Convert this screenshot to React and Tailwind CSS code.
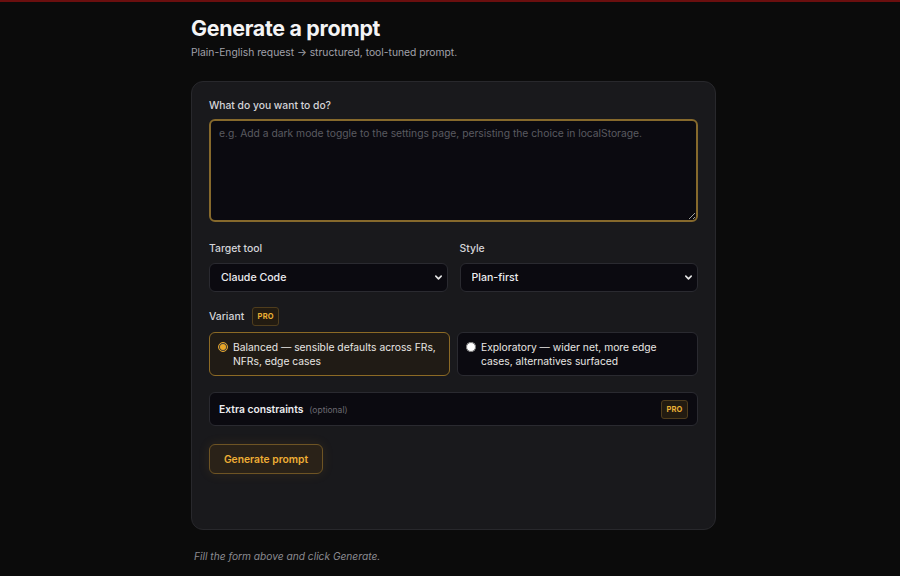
import React from 'react'

// 下拉选择框
function SelectField({ label, value, options }) {
  return (
    <div className="flex flex-col gap-[7px]">
      <span className="text-[10.4px] font-medium leading-[14px] text-[#d4d4d8]">{label}</span>
      <div className="relative">
        <select
          defaultValue={value}
          className="h-[29px] w-full appearance-none rounded-md border border-[#2a2a30] bg-[#0b0a10] pl-[11px] pr-8 text-[10.6px] font-medium text-[#ececef] outline-none"
        >
          {options.map((o) => (
            <option key={o}>{o}</option>
          ))}
        </select>
        <svg
          className="pointer-events-none absolute right-[5px] top-[10px] h-[9px] w-[9px] text-[#e5e5e5]"
          viewBox="0 0 10 10"
          fill="none"
          stroke="currentColor"
          strokeWidth="1.8"
          strokeLinecap="round"
          strokeLinejoin="round"
        >
          <path d="M2 3.5l3 3 3-3" />
        </svg>
      </div>
    </div>
  )
}

function ProBadge() {
  return (
    <span className="inline-flex h-[19px] w-[27px] items-center justify-center rounded-[3px] border border-[#4f3d1d] bg-[#221b11] text-[7.5px] font-bold tracking-wide text-[#eab035]">
      PRO
    </span>
  )
}

// 变体选项卡片
function VariantOption({ checked, title, children }) {
  return (
    <label
      className={`flex items-start gap-[5px] rounded-md border pb-[7px] pl-[8px] pr-[8px] pt-[7px] text-[10.3px] leading-[14px] ${
        checked ? 'border-[#8c6a25] bg-[#201b15] text-[#e8e6e3]' : 'border-[#2a2a30] bg-[#0b0a10] text-[#e8e6e3]'
      }`}
    >
      <input
        type="radio"
        name="variant"
        defaultChecked={checked}
        className="m-0 mt-[2px] h-[10px] w-[10px] shrink-0 accent-[#e8a628]"
      />
      <span>
        {title} — {children}
      </span>
    </label>
  )
}

export default function App() {
  return (
    <div
      className="min-h-[576px] w-full border-t-2 border-[#6b0f0f] bg-[#0b0b0b] pl-[191px] text-white"
      style={{ fontFamily: 'Inter, "Noto Sans", sans-serif' }}
    >
      <div className="w-[525px] pt-[12px]">
        {/* 标题 */}
        <h1 className="text-[21.4px] font-bold leading-[28px] tracking-[-0.3px] text-[#f4f4f5]">Generate a prompt</h1>
        <p className="mt-[3px] text-[10.3px] leading-[14px] text-[#a1a1aa]">
          Plain-English request → structured, tool-tuned prompt.
        </p>

        {/* 表单卡片 */}
        <div className="mt-[22px] h-[449px] rounded-xl border border-[#28282c] bg-[#19191c] px-[17px] pt-[16px]">
          <label className="block text-[10.3px] font-medium leading-[14px] text-[#d4d4d8]">What do you want to do?</label>
          <textarea
            autoFocus
            placeholder="e.g. Add a dark mode toggle to the settings page, persisting the choice in localStorage."
            className="mt-[7px] block h-[103px] w-full resize-y rounded-md border-2 border-[#86692c] bg-[#0b0a10] px-[8px] py-[5px] text-[10.3px] text-[#e5e5e5] outline-none placeholder:text-[#5a5a60]"
          />

          <div className="mt-[20px] grid grid-cols-2 gap-[12px]">
            <SelectField label="Target tool" value="Claude Code" options={['Claude Code', 'Cursor', 'Copilot']} />
            <SelectField label="Style" value="Plan-first" options={['Plan-first', 'Direct', 'Step-by-step']} />
          </div>

          <div className="mt-[15px] flex items-center gap-[8px]">
            <span className="text-[10.4px] font-medium leading-[14px] text-[#d4d4d8]">Variant</span>
            <ProBadge />
          </div>

          <div className="mt-[6px] grid grid-cols-2 gap-[7px]">
            <VariantOption checked title="Balanced">
              sensible defaults across FRs, NFRs, edge cases
            </VariantOption>
            <VariantOption title="Exploratory">wider net, more edge cases, alternatives surfaced</VariantOption>
          </div>

          {/* 额外约束 */}
          <div className="mt-[16px] flex h-[34px] items-center justify-between rounded-md border border-[#2a2a30] bg-[#0b0a10] pl-[9px] pr-[9px]">
            <div className="flex items-baseline gap-[6px]">
              <span className="text-[10.3px] font-semibold text-[#ececef]">Extra constraints</span>
              <span className="text-[8.5px] text-[#6b6b72]">(optional)</span>
            </div>
            <ProBadge />
          </div>

          <button className="mt-[18px] h-[30px] w-[114px] rounded-md border border-[#6e5424] bg-[#2a2218] text-[10.3px] font-semibold text-[#eeae35] shadow-[0_0_12px_rgba(200,140,40,0.12)]">
            Generate prompt
          </button>
        </div>

        <p className="mt-[19px] pl-[3px] text-[10.2px] italic leading-[14px] text-[#8a8a90]">
          Fill the form above and click Generate.
        </p>
      </div>
    </div>
  )
}
